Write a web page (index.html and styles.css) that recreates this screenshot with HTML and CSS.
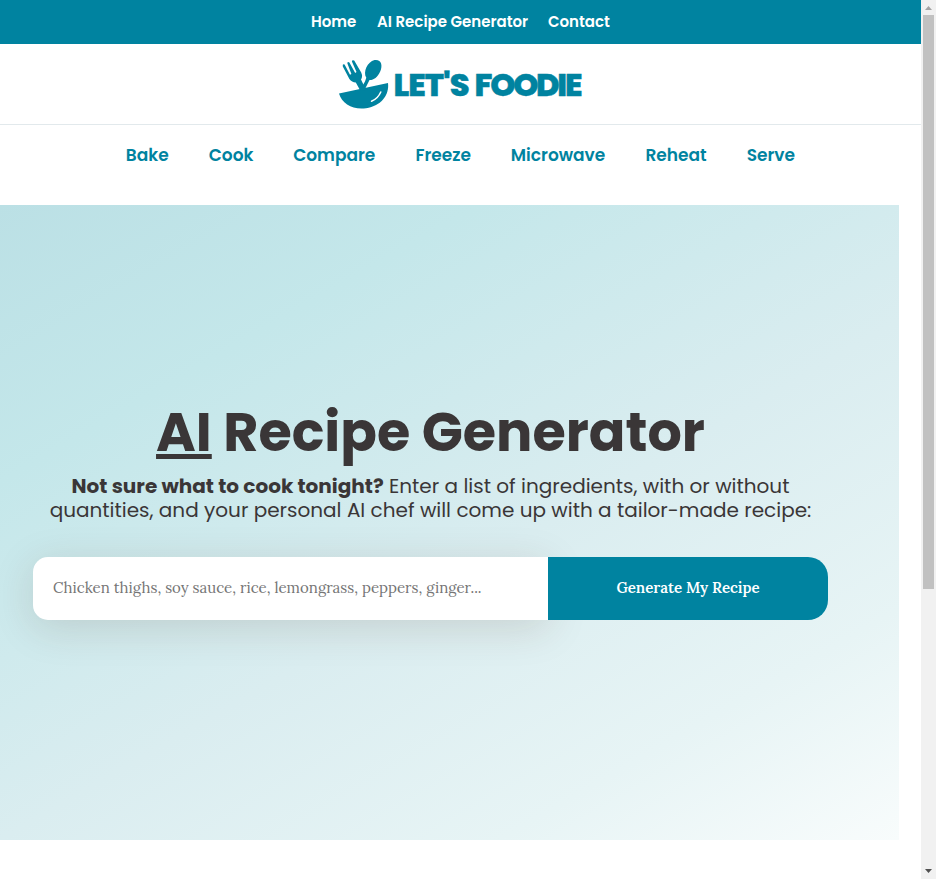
FILE: index.html
```
<!DOCTYPE html>
<html lang="en">
<head>
<meta charset="utf-8">
<title>AI Recipe Generator - Let's Foodie</title>
<link rel="stylesheet" href="styles.css">
</head>
<body>
<div class="window">
  <div class="page">
    <nav class="top-nav">
      <a class="top-home">Home</a>
      <a class="top-ai">AI Recipe Generator</a>
      <a class="top-contact">Contact</a>
    </nav>
    <header class="brand">
      <svg class="logo" width="270" height="60" viewBox="0 0 270 60">
        <g fill="#0083a0">
          <path d="M3 35.500L52 25C53.500 37 45 48 30 50.200C17 52 6 46 3 35.500Z"/>
          <path d="M6.800 8.400Q6.200 5.600 8.600 6.500L14 16.800L15.400 16L11.400 5.500Q11.300 3.400 13.400 4.500L19.200 14.900L20.500 14.100L15.900 3.600Q16 1.500 18.200 2.500L25.200 14.600Q27 18.800 25 21.500L30 32L24.500 33L19.800 24.500Q15.800 24.400 13.400 21Z"/>
          <path d="M29 23.500L30.300 19.800C26.700 14 31.500 3.600 38.500 2C45.200 1 47 7 44.200 13.500C41.500 19.500 37.500 22.200 33.500 22L31.500 26L28.500 32H24Z"/>
        </g>
        <path d="M44.800 34Q42 40.500 35.500 43.300" fill="none" stroke="#fff" stroke-width="1.500" stroke-linecap="round"/>
        <text class="logo-text" x="57.500" y="38" textLength="76" lengthAdjust="spacing">LET'S</text>
        <text class="logo-text" x="138.500" y="38" textLength="108" lengthAdjust="spacing">FOODIE</text>
      </svg>
    </header>
    <nav class="main-nav">
      <a class="bake">Bake</a>
      <a class="cook">Cook</a>
      <a class="compare">Compare</a>
      <a class="freeze">Freeze</a>
      <a class="microwave">Microwave</a>
      <a class="reheat">Reheat</a>
      <a class="serve">Serve</a>
    </nav>
    <main class="hero">
      <h1><span class="underlined">AI</span> Recipe Generator</h1>
      <p class="intro"><strong>Not sure what to cook tonight?</strong> Enter a list of ingredients, with or without<br>quantities, and your personal AI chef will come up with a tailor-made recipe:</p>
      <form class="generator">
        <input type="text" placeholder="Chicken thighs, soy sauce, rice, lemongrass, peppers, ginger...">
        <button type="button">Generate My Recipe</button>
      </form>
    </main>
  </div>
  <div class="scrollbar">
    <svg width="15" height="15"><path d="M4 10H11L7.500 6Z" fill="#a3a3a3"/></svg>
    <div class="thumb"></div>
    <svg class="down" width="15" height="15"><path d="M4 5H11L7.500 9Z" fill="#505050"/></svg>
  </div>
</div>
</body>
</html>
```
FILE: styles.css
```
* { box-sizing: border-box; }
body { margin: 0; background: #fff; font-family: Poppins, Inter, sans-serif; overflow: hidden; }
.window { display: flex; height: 879px; }
.page { width: 921px; }
.top-nav { height: 44px; padding-bottom: 2px; background: #0083a0; color: #fff; display: flex; justify-content: center; align-items: center; gap: 20px; font-size: 15px; font-weight: 600; white-space: nowrap; }
.top-home { width: 46px; }
.top-ai { width: 151px; }
.top-contact { width: 62px; }
.brand { height: 81px; border-bottom: 1px solid #e2e9ec; padding: 14px 0 0 336px; }
.logo { display: block; }
.logo-text { font-size: 32px; font-weight: 800; fill: #0083a0; stroke: #0083a0; stroke-width: .4px; }
.main-nav { height: 80px; padding: 17px 0 0 125.8px; display: flex; gap: 40px; color: #0083a0; font-size: 17px; font-weight: 600; line-height: 26px; white-space: nowrap; }
.bake { width: 43px; }
.cook { width: 44.400px; }
.compare { width: 82.300px; }
.freeze { width: 55.300px; }
.microwave { width: 94.700px; }
.reheat { width: 61.200px; }
.serve { width: 49px; }
.hero { width: 899px; height: 635px; padding: 197px 71px 0 33px; background: linear-gradient(150deg, #bbe0e5 0%, #c4e7ea 24%, #daedf0 55%, #e7f4f5 80%, #f8fcfc 100%); color: #3a3637; }
h1 { margin: 0; font-size: 54px; line-height: 60px; font-weight: 700; text-align: center; white-space: nowrap; }
.underlined { text-decoration: underline; text-decoration-thickness: 5px; text-underline-offset: 3px; text-decoration-skip-ink: none; }
.intro { margin: 12px 0 0; font-size: 20px; line-height: 24px; text-align: center; white-space: nowrap; }
.generator { display: flex; height: 63px; margin-top: 35px; }
input { width: 515px; border: 0; border-radius: 15px 0 0 15px; padding: 0 20px 3px; font: 15px Lora, "Liberation Serif", serif; background: #fff; box-shadow: 0 8px 40px rgba(80, 50, 30, .15); }
input::placeholder { color: #757575; opacity: 1; }
button { position: relative; width: 280px; border: 0; border-radius: 0 20px 20px 0; padding-bottom: 3px; background: #0083a0; color: #fff; font: 600 15px Lora, "Liberation Serif", serif; }
.scrollbar { width: 15px; background: #f1f1f1; display: flex; flex-direction: column; }
.scrollbar svg { display: block; }
.thumb { width: 11px; height: 574px; margin-left: 2px; background: #c1c1c1; }
.down { margin-top: auto; }
```
